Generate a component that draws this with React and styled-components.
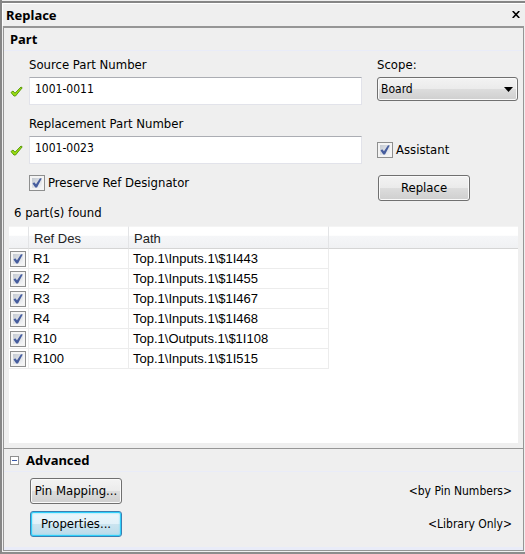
import React, { useState } from "react";
import styled, { createGlobalStyle, css } from "styled-components";

const Global = createGlobalStyle`
  *, *::before, *::after { box-sizing: border-box; }
  body {
    margin: 0;
    background: #efefef;
    color: #000;
    font: 13px/16px "DejaVu Sans Condensed", "DejaVu Sans", sans-serif;
  }
  button, input, select { font: inherit; color: inherit; margin: 0; }
`;

const Panel = styled.main`
  display: flex;
  flex-direction: column;
  min-height: 100vh;
  padding: 1px 0 1px;
  background: #efefef;
  border-left: 2px solid #868686;
  border-bottom: 2px solid #8c8c8c;
`;

const TitleBar = styled.header`
  display: flex;
  align-items: center;
  justify-content: space-between;
  height: 25px;
  padding: 0 3px 0 4px;
  border-top: 2px solid #868686;
  box-shadow: inset 1px 1px #fff;
`;

const heading = css`
  margin: 0;
  font: 700 13px/20px "Noto Sans", "Open Sans", sans-serif;
`;

const Title = styled.h1`
  ${heading}
`;

const CloseButton = styled.button`
  display: grid;
  place-items: center;
  width: 12px;
  height: 16px;
  padding: 0;
  border: 0;
  background: none;
`;

const Content = styled.div`
  flex: 1;
  display: flex;
  flex-direction: column;
  margin: 0 1px;
  border: 1px solid #969696;
  border-top: 2px solid #969696;
`;

const PartSection = styled.section`
  flex: 1;
  display: flex;
  flex-direction: column;
`;

const AdvancedSection = styled.section`
  border-top: 1px solid #969696;
  border-bottom: 3px solid #e9ecf8;
`;

const SectionHeader = styled.div`
  display: flex;
  align-items: center;
  gap: 7px;
  height: 23px;
  padding: 0 6px;
  border-bottom: 1px solid #e9ecf8;
`;

const SectionTitle = styled.h2`
  ${heading}
`;

const Collapse = styled.button`
  display: grid;
  place-items: center;
  width: 9px;
  height: 9px;
  padding: 0;
  border: 1px solid #8f8f8f;
  background: #fff;
`;

const Form = styled.div`
  display: grid;
  grid-template-columns: minmax(0, 1fr) 141px;
  column-gap: 15px;
  padding: 5px 5px 0 6px;
`;

const Column = styled.div`
  display: flex;
  flex-direction: column;
`;

const Field = styled.div`
  display: grid;
  grid-template-columns: 19px minmax(0, 1fr);
  align-items: center;
  height: 59px;
  align-content: start;
  & > label { grid-column: 2; }
`;

const Label = styled.label`
  height: 21px;
  line-height: 18px;
`;

const TextInput = styled.input`
  width: 100%;
  height: 28px;
  padding: 0 5px 4px;
  border: 1px solid #e2e3ea;
  border-top-color: #abadb3;
  background: #fff;
  font-size: 12px;
  outline: 0;
`;

const ScopeField = styled.div`
  display: grid;
  height: 86px;
  align-content: start;
`;

const SelectBox = styled.div`
  display: grid;
  align-items: center;
  & > * { grid-area: 1 / 1; }
  & > svg { justify-self: end; margin-right: 5px; pointer-events: none; }
`;

const bevel = css`
  border: 1px solid #707070;
  border-radius: 3px;
  background: linear-gradient(#f3f3f3, #ebebeb 48%, #dddddd 50%, #cfcfcf);
  box-shadow: inset 0 0 0 1px #fafafa;
`;

const Select = styled.select`
  ${bevel}
  appearance: none;
  width: 100%;
  height: 24px;
  padding: 0 20px 0 3px;
  font-size: 12px;
`;

const Button = styled.button`
  ${bevel}
  width: 92px;
  height: 26px;
  padding: 0;
  white-space: nowrap;
  ${({ $active }) => $active && css`
    border-color: #3c7fb1;
    background: linear-gradient(#edf6fb, #e2f1f9 48%, #cbe4f0 50%, #badbea);
    box-shadow: inset 0 0 0 1px #2fd0fb, inset 0 0 2px 1px #5cdcfb;
  `}
`;

const CheckLabel = styled.label`
  display: flex;
  align-items: center;
  gap: 3px;
  height: 16px;
`;

const PreserveRow = styled.div`
  padding: 1px 0 0 19px;
`;

const ReplaceRow = styled.div`
  padding: 17px 0 0 1px;
`;

const CheckBox = styled.span`
  display: grid;
  width: 16px;
  height: 16px;
  place-items: center;
  & > * { grid-area: 1 / 1; }
  & > svg { pointer-events: none; }
`;

const CheckInput = styled.input`
  appearance: none;
  width: 16px;
  height: 16px;
  padding: 2px;
  border: 1px solid #8e8f8f;
  background: linear-gradient(135deg, #c3c9d1, #f5f6f8) content-box, #f4f4f4;
`;

const Found = styled.p`
  margin: 0;
  padding: 4px 10px 5px;
`;

const List = styled.div`
  flex: 1;
  margin: 0 5px 5px;
  min-height: 144px;
  background: #fff;
  font: 13px/19px "Liberation Sans", Arial, sans-serif;
`;

const Table = styled.table`
  width: 100%;
  border-collapse: separate;
  border-spacing: 0;
  table-layout: fixed;
`;

const HeadCell = styled.th`
  width: ${({ $width }) => $width || "auto"};
  height: 23px;
  padding: 2px 5px 0;
  border-top: 1px solid #f4f4f4;
  border-right: 1px solid #e3e4e6;
  border-bottom: 1px solid #d5d5d5;
  background: linear-gradient(#fff 40%, #f5f6f8 42%, #f0f1f3);
  color: #222;
  font-weight: 400;
  text-align: left;
  &:last-child { border-right: 0; }
`;

const Cell = styled.td`
  height: 20px;
  padding: ${({ $tick }) => ($tick ? "0 0 0 1px" : "0 4px")};
  border-right: 1px solid #ececec;
  border-bottom: 1px solid #ececec;
  white-space: nowrap;
`;

const Actions = styled.div`
  display: grid;
  gap: 7px;
  padding: 6px 11px 10px 26px;
`;

const ActionRow = styled.div`
  display: flex;
  align-items: center;
  justify-content: space-between;
`;

const ActionValue = styled.span`
  font-size: 12px;
`;

const GreenTick = () => (
  <svg width="13" height="11" viewBox="0 0 13 11" aria-hidden="true">
    <path d="M1 6.5 3 5l2 2.2L11 1l1.2.8L5.5 10H4z" fill="#9be010" stroke="#5c9a0d" strokeWidth="1" />
  </svg>
);

function Tick({ label, id }) {
  const [on, setOn] = useState(true);
  return (
    <CheckBox>
      <CheckInput
        type="checkbox"
        id={id}
        aria-label={label}
        checked={on}
        onChange={(e) => setOn(e.target.checked)}
      />
      {on && (
        <svg width="10" height="10" viewBox="0 0 10 10" aria-hidden="true">
          <path d="M.5 5.5 2.2 4.2 4 6.2 8 .2 9.7.5 5 9.4H3.3z" fill="#465d9e" />
        </svg>
      )}
    </CheckBox>
  );
}

const parts = [
  ["R1", "Top.1\\Inputs.1\\$1I443"],
  ["R2", "Top.1\\Inputs.1\\$1I455"],
  ["R3", "Top.1\\Inputs.1\\$1I467"],
  ["R4", "Top.1\\Inputs.1\\$1I468"],
  ["R10", "Top.1\\Outputs.1\\$1I108"],
  ["R100", "Top.1\\Inputs.1\\$1I515"],
];

export default function App() {
  return (
    <>
      <Global />
      <Panel>
        <TitleBar>
          <Title>Replace</Title>
          <CloseButton aria-label="Close">
            <svg width="8" height="7" viewBox="0 0 8 7" aria-hidden="true">
              <path d="M.7 0 7.3 7M7.3 0 .7 7" stroke="#000" strokeWidth="1.6" />
            </svg>
          </CloseButton>
        </TitleBar>
        <Content>
          <PartSection>
            <SectionHeader>
              <SectionTitle>Part</SectionTitle>
            </SectionHeader>
            <Form>
              <Column>
                <Field>
                  <Label htmlFor="source">Source Part Number</Label>
                  <GreenTick />
                  <TextInput id="source" defaultValue="1001-0011" />
                </Field>
                <Field>
                  <Label htmlFor="replacement">Replacement Part Number</Label>
                  <GreenTick />
                  <TextInput id="replacement" defaultValue="1001-0023" />
                </Field>
                <PreserveRow>
                  <CheckLabel htmlFor="preserve">
                    <Tick id="preserve" />
                    Preserve Ref Designator
                  </CheckLabel>
                </PreserveRow>
              </Column>
              <Column>
                <ScopeField>
                  <Label htmlFor="scope">Scope:</Label>
                  <SelectBox>
                    <Select id="scope" defaultValue="Board">
                      <option>Board</option>
                    </Select>
                    <svg width="9" height="5" viewBox="0 0 9 5" aria-hidden="true">
                      <path d="M0 0h9L4.5 5z" />
                    </svg>
                  </SelectBox>
                </ScopeField>
                <CheckLabel htmlFor="assistant">
                  <Tick id="assistant" />
                  Assistant
                </CheckLabel>
                <ReplaceRow>
                  <Button>Replace</Button>
                </ReplaceRow>
              </Column>
            </Form>
            <Found>6 part(s) found</Found>
            <List>
              <Table>
                <thead>
                  <tr>
                    <HeadCell $width="20px" aria-label="Selected" />
                    <HeadCell $width="100px">Ref Des</HeadCell>
                    <HeadCell $width="200px">Path</HeadCell>
                    <HeadCell aria-hidden="true" />
                  </tr>
                </thead>
                <tbody>
                  {parts.map(([ref, path]) => (
                    <tr key={ref}>
                      <Cell $tick>
                        <Tick label={ref} />
                      </Cell>
                      <Cell>{ref}</Cell>
                      <Cell>{path}</Cell>
                    </tr>
                  ))}
                </tbody>
              </Table>
            </List>
          </PartSection>
          <AdvancedSection>
            <SectionHeader>
              <Collapse aria-label="Collapse Advanced">
                <svg width="5" height="1" viewBox="0 0 5 1" aria-hidden="true">
                  <path d="M0 0h5v1H0z" fill="#3c5aa8" />
                </svg>
              </Collapse>
              <SectionTitle>Advanced</SectionTitle>
            </SectionHeader>
            <Actions>
              <ActionRow>
                <Button>Pin Mapping...</Button>
                <ActionValue>&lt;by Pin Numbers&gt;</ActionValue>
              </ActionRow>
              <ActionRow>
                <Button $active>Properties...</Button>
                <ActionValue>&lt;Library Only&gt;</ActionValue>
              </ActionRow>
            </Actions>
          </AdvancedSection>
        </Content>
      </Panel>
    </>
  );
}
